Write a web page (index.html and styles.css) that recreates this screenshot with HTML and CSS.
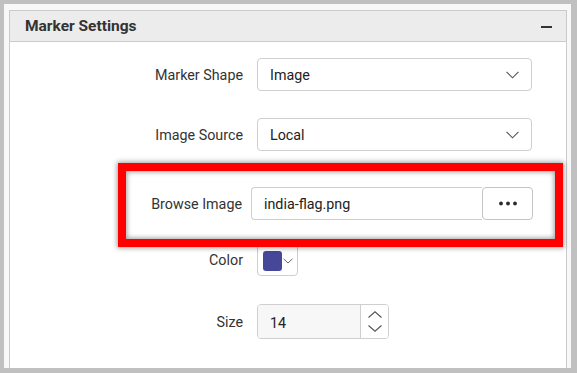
FILE: index.html
```html
<!DOCTYPE html>
<html>
<head>
<meta charset="utf-8">
<link rel="stylesheet" href="styles.css">
</head>
<body>
<div class="screen">
  <div class="sheet">
    <div class="panel">
      <div class="panel-header">
        <span class="panel-title">Marker Settings</span>
        <span class="collapse"></span>
      </div>
      <div class="form">
        <div class="row row-shape">
          <label class="label">Marker Shape</label>
          <div class="select">
            <span class="select-value">Image</span>
            <svg class="chev" width="13" height="8" viewBox="0 0 13 8"><polyline points="0.5,0.8 6.5,6.8 12.5,0.8" fill="none" stroke="#555" stroke-width="1.1"/></svg>
          </div>
        </div>
        <div class="row row-source">
          <label class="label">Image Source</label>
          <div class="select">
            <span class="select-value">Local</span>
            <svg class="chev" width="13" height="8" viewBox="0 0 13 8"><polyline points="0.5,0.8 6.5,6.8 12.5,0.8" fill="none" stroke="#555" stroke-width="1.1"/></svg>
          </div>
        </div>
        <div class="row row-browse">
          <label class="label label-browse">Browse Image</label>
          <div class="browse">
            <div class="browse-input">india-flag.png</div>
            <div class="browse-btn">
              <svg width="20" height="5" viewBox="0 0 20 5"><circle cx="3" cy="2.5" r="1.9" fill="#2b2b2b"/><circle cx="10" cy="2.5" r="1.9" fill="#2b2b2b"/><circle cx="17" cy="2.5" r="1.9" fill="#2b2b2b"/></svg>
            </div>
          </div>
        </div>
        <div class="row row-color">
          <label class="label">Color</label>
          <div class="color-picker">
            <span class="swatch"></span>
            <svg class="chev-small" width="10" height="6" viewBox="0 0 10 6"><polyline points="0.5,0.8 5,5 9.5,0.8" fill="none" stroke="#666" stroke-width="1"/></svg>
          </div>
        </div>
        <div class="row row-size">
          <label class="label">Size</label>
          <div class="numeric">
            <div class="numeric-value">14</div>
            <div class="spin">
              <svg width="14" height="7" viewBox="0 0 14 7"><polyline points="0.5,6.5 7,0.8 13.5,6.5" fill="none" stroke="#555" stroke-width="1.1"/></svg>
              <svg width="14" height="7" viewBox="0 0 14 7"><polyline points="0.5,0.5 7,6.2 13.5,0.5" fill="none" stroke="#555" stroke-width="1.1"/></svg>
            </div>
          </div>
        </div>
      </div>
    </div>
  </div>
</div>
</body>
</html>
```

FILE: styles.css
```css
html, body {
  margin: 0;
  padding: 0;
}
body {
  font-family: Roboto, "Liberation Sans", sans-serif;
  background: #c0c0c0;
}
.screen {
  width: 577px;
  height: 373px;
  box-sizing: border-box;
  padding: 4px 6px 5px 4px;
  background: #c0c0c0;
  overflow: hidden;
}
.sheet {
  height: 100%;
  box-sizing: border-box;
  padding: 6px 4px 0 5px;
  background: #f8f8f8;
  overflow: hidden;
}
.panel {
  height: 100%;
  box-sizing: border-box;
  border: 1px solid #cbcbcb;
  border-bottom: none;
  background: #fff;
}
.panel-header {
  height: 30px;
  border-bottom: 1px solid #cbcbcb;
  background: #ececec;
  display: flex;
  align-items: center;
  justify-content: space-between;
  padding: 0 14px 0 15px;
}
.panel-title {
  font-size: 15.5px;
  font-weight: 700;
  color: #333;
}
.collapse {
  width: 11px;
  height: 2px;
  background: #333;
  margin-top: 1px;
}
.form {
  padding-top: 16px;
  display: flex;
  flex-direction: column;
}
.row {
  display: flex;
  align-items: center;
}
.label {
  width: 247px;
  box-sizing: border-box;
  padding-right: 14px;
  text-align: right;
  font-size: 14.3px;
  color: #333;
}
.row-source { margin-top: 27px; }
.row-browse { margin-top: 36px; position: relative; }
.row-color { margin-top: 23px; }
.row-size { margin-top: 28px; }

.select {
  width: 275px;
  height: 33px;
  box-sizing: border-box;
  border: 1px solid #cfcfcf;
  border-radius: 4px;
  display: flex;
  align-items: center;
  justify-content: space-between;
  padding: 0 12px 0 12px;
}
.select-value {
  font-size: 14.3px;
  color: #222;
}
.chev { display: block; margin-top: 1px; }

.row-browse::before {
  content: "";
  position: absolute;
  left: 108px;
  right: 3px;
  top: -24px;
  bottom: -27px;
  border: 8px solid #ff0000;
  box-shadow: 0 0 5px 1px rgba(0,0,0,0.38), inset 0 0 5px 1px rgba(0,0,0,0.38);
  pointer-events: none;
  z-index: 1;
}
.label-browse {
  width: 232px;
  padding-right: 0;
  margin-right: 9px;
}
.browse {
  display: flex;
  width: 282px;
  height: 33px;
}
.browse-input {
  flex: 1;
  box-sizing: border-box;
  border: 1px solid #cfcfcf;
  border-right: none;
  border-radius: 4px 0 0 4px;
  font-size: 14.3px;
  color: #222;
  padding-left: 12px;
  display: flex;
  align-items: center;
}
.browse-btn {
  width: 51px;
  box-sizing: border-box;
  border: 1px solid #c4c4c4;
  border-radius: 4px;
  display: flex;
  align-items: center;
  justify-content: center;
  background: #fff;
}
.browse-btn svg { display: block; }

.color-picker {
  width: 41px;
  height: 33px;
  box-sizing: border-box;
  border: 1px solid #cfcfcf;
  border-radius: 4px;
  display: flex;
  align-items: center;
  padding-left: 5px;
}
.swatch {
  width: 19px;
  height: 20px;
  border-radius: 3px;
  background: #47479a;
  margin-top: 2px;
}
.chev-small { display: block; margin-left: 1px; margin-top: 3px; }

.numeric {
  width: 132px;
  height: 35px;
  box-sizing: border-box;
  border: 1px solid #cfcfcf;
  border-radius: 4px;
  display: flex;
  overflow: hidden;
}
.numeric-value {
  width: 103px;
  background: #f7f7f7;
  border-right: 1px solid #cfcfcf;
  font-size: 14.3px;
  color: #222;
  padding-left: 12px;
  box-sizing: border-box;
  display: flex;
  align-items: center;
  padding-top: 2px;
}
.spin {
  flex: 1;
  display: flex;
  flex-direction: column;
  align-items: center;
  justify-content: center;
  gap: 7px;
  background: #fff;
}
.spin svg { display: block; }
```
